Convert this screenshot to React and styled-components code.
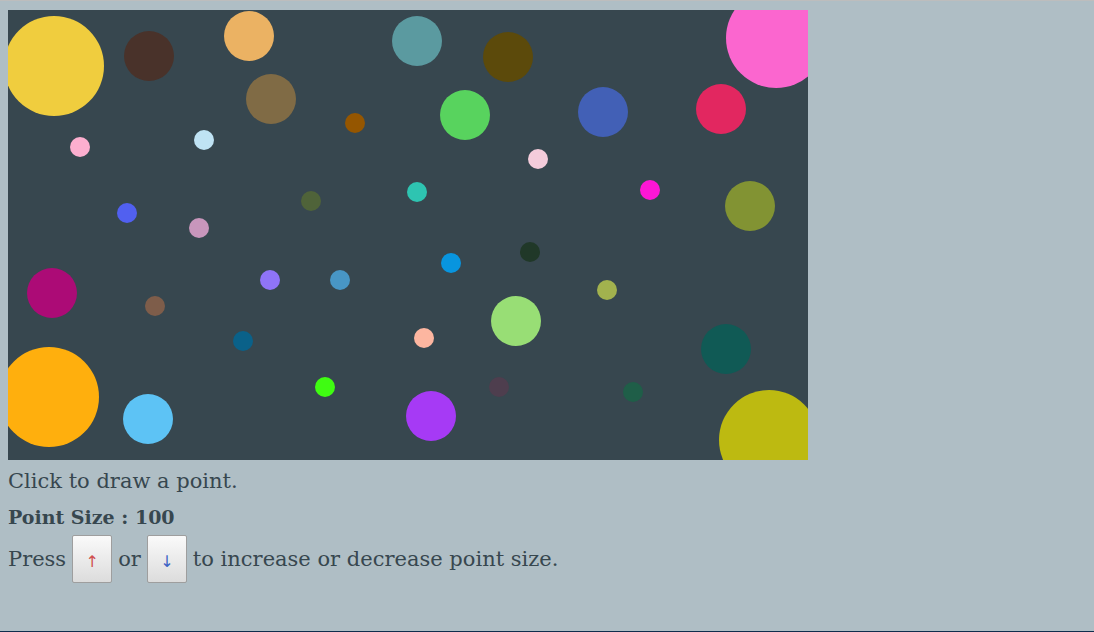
import React from "react";
import styled, { createGlobalStyle } from "styled-components";

const points = [
  { x: 46, y: 56, r: 50, c: "#F0CD3E" },
  { x: 141, y: 46, r: 25, c: "#49322A" },
  { x: 241, y: 26, r: 25, c: "#EBB263" },
  { x: 409, y: 31, r: 25, c: "#5B9AA0" },
  { x: 263, y: 89, r: 25, c: "#806B45" },
  { x: 347, y: 113, r: 10, c: "#955600" },
  { x: 72, y: 137, r: 10, c: "#FCAFCF" },
  { x: 196, y: 130, r: 10, c: "#BFE3F4" },
  { x: 119, y: 203, r: 10, c: "#5160F0" },
  { x: 191, y: 218, r: 10, c: "#C896BC" },
  { x: 303, y: 191, r: 10, c: "#4F6339" },
  { x: 409, y: 182, r: 10, c: "#2EC4B1" },
  { x: 500, y: 47, r: 25, c: "#5C4A0B" },
  { x: 768, y: 28, r: 50, c: "#FB66CF" },
  { x: 457, y: 105, r: 25, c: "#58D35E" },
  { x: 595, y: 102, r: 25, c: "#4260B6" },
  { x: 713, y: 99, r: 25, c: "#E22760" },
  { x: 530, y: 149, r: 10, c: "#F4CCDB" },
  { x: 642, y: 180, r: 10, c: "#FD16D5" },
  { x: 742, y: 196, r: 25, c: "#829333" },
  { x: 44, y: 283, r: 25, c: "#AC0B76" },
  { x: 147, y: 296, r: 10, c: "#7E5D4A" },
  { x: 262, y: 270, r: 10, c: "#8F74F7" },
  { x: 332, y: 270, r: 10, c: "#4896C5" },
  { x: 235, y: 331, r: 10, c: "#0A6189" },
  { x: 41, y: 387, r: 50, c: "#FFAF0D" },
  { x: 140, y: 409, r: 25, c: "#5DC3F5" },
  { x: 317, y: 377, r: 10, c: "#3FFC12" },
  { x: 443, y: 253, r: 10, c: "#0895DF" },
  { x: 522, y: 242, r: 10, c: "#203828" },
  { x: 599, y: 280, r: 10, c: "#A2B24E" },
  { x: 508, y: 311, r: 25, c: "#98DE75" },
  { x: 416, y: 328, r: 10, c: "#FDB6A0" },
  { x: 718, y: 339, r: 25, c: "#105A55" },
  { x: 491, y: 377, r: 10, c: "#4E3E4E" },
  { x: 625, y: 382, r: 10, c: "#1F5E48" },
  { x: 423, y: 406, r: 25, c: "#A63AF5" },
  { x: 761, y: 430, r: 50, c: "#BDBA11" },
];

const GlobalStyle = createGlobalStyle`
  html, body {
    margin: 0;
    padding: 0;
    background: #AFBEC5;
  }
`;

const Page = styled.div`
  box-sizing: border-box;
  height: 632px;
  padding: 9px 8px 0;
  border-top: 1px solid #BDBDBD;
  border-bottom: 1px solid #0F2D4D;
  color: #37474F;
  font-family: "DejaVu Serif", "Liberation Serif", serif;
  font-size: 21px;
`;

const Board = styled.svg`
  display: block;
  width: 800px;
  height: 450px;
  background: #37474F;
  cursor: crosshair;
`;

const Line = styled.div`
  height: ${(p) => p.h}px;
  line-height: ${(p) => p.h}px;
  font-size: ${(p) => (p.bold ? 19 : 21)}px;
  font-weight: ${(p) => (p.bold ? 700 : 400)};
  white-space: nowrap;
`;

const KeyRow = styled.div`
  display: flex;
  align-items: center;
  gap: 6px;
  margin-top: 3px;
`;

const Key = styled.span`
  box-sizing: border-box;
  display: inline-flex;
  align-items: center;
  justify-content: center;
  width: 40px;
  height: 48px;
  padding-top: 4px;
  border: 1px solid #9E9E9E;
  border-radius: 2px;
  background: linear-gradient(#FAFAFA, #DCDCDC);
  color: ${(p) => p.tint};
  font-family: "DejaVu Sans", sans-serif;
  font-size: 16px;
`;

export default function App() {
  return (
    <Page>
      <GlobalStyle />
      <Board viewBox="0 0 800 450">
        {points.map((p, i) => (
          <circle key={i} cx={p.x} cy={p.y} r={p.r} fill={p.c} />
        ))}
      </Board>
      <Line h={42}>Click to draw a point.</Line>
      <Line h={30} bold>Point Size : 100</Line>
      <KeyRow>
        <span>Press</span>
        <Key tint="#D0504F">↑</Key>
        <span>or</span>
        <Key tint="#3C63C4">↓</Key>
        <span>to increase or decrease point size.</span>
      </KeyRow>
    </Page>
  );
}
